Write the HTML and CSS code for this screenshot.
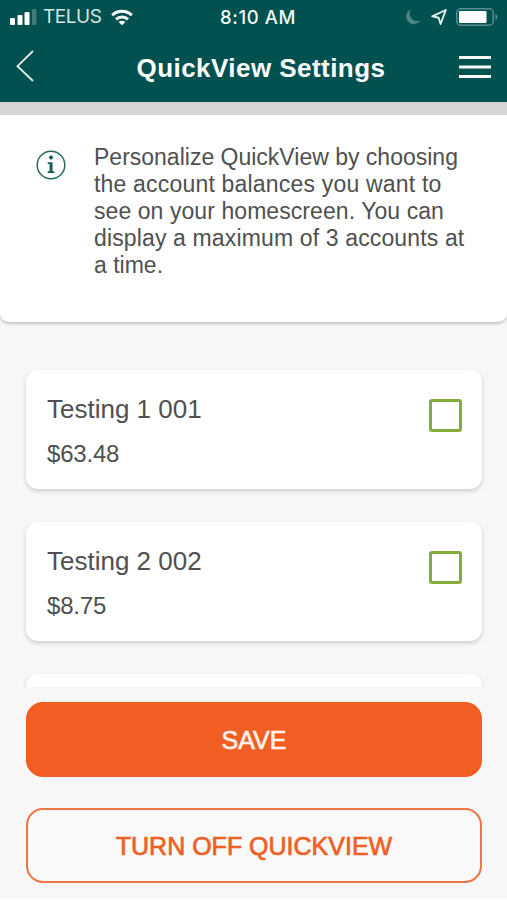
FILE: index.html
```html
<!DOCTYPE html>
<html lang="en">
<head>
<meta charset="utf-8">
<title>QuickView Settings</title>
<link rel="stylesheet" href="styles.css">
</head>
<body>
<div class="app">
  <header class="header">
    <div class="status">
      <div class="carrier">
        <svg width="27" height="16" viewBox="0 0 27 16" fill="#fff"><rect x="0" y="9" width="5" height="7" rx="1"/><rect x="7.500" y="6" width="5" height="10" rx="1"/><rect x="14.500" y="3" width="5" height="13" rx="1"/><rect x="22" y="0" width="4.500" height="16" rx="1" opacity=".25"/></svg>
        <span class="carrier-name">TELUS</span>
        <svg class="wifi" width="22" height="17" viewBox="0 0 22 17" fill="none" stroke="#fff" stroke-width="3"><path d="M1.200 6.200a14 14 0 0 1 19.600 0"/><path d="M5 10.400a8.600 8.600 0 0 1 12 0"/><path d="M11 16.200L7.600 13a4.900 4.900 0 0 1 6.800 0z" fill="#fff" stroke="none"/></svg>
      </div>
      <span class="clock">8:10 AM</span>
      <div class="indicators">
        <svg class="moon" width="15" height="16" viewBox="0 0 15 16"><path d="M5 0.500a7.600 7.600 0 1 0 9.500 10.700A7.400 7.400 0 0 1 5 .5z" fill="#4f8582"/></svg>
        <svg class="arrow" width="16" height="16" viewBox="0 0 16 16" fill="none" stroke="#e4eeed" stroke-width="1.900" stroke-linejoin="round"><path d="M14.800 1L1.200 7.300L7.600 8.700L9.600 15z"/></svg>
        <svg width="42" height="18" viewBox="0 0 42 18"><rect x=".8" y=".8" width="36.500" height="16.400" rx="4" fill="none" stroke="#5a8d8a" stroke-width="1.500"/><rect x="3" y="3" width="27.500" height="12" rx="1" fill="#fff"/><path d="M39.500 6c2.200.8 2.200 5.200 0 6z" fill="#6b9794"/></svg>
      </div>
    </div>
    <div class="nav">
      <svg width="18" height="32" viewBox="0 0 18 32" fill="none" stroke="#e8f1f0" stroke-width="1.800"><path d="M17 1L1.500 16.200L17 31"/></svg>
      <h1 class="title">QuickView Settings</h1>
      <svg class="menu" width="32" height="23" viewBox="0 0 32 23" fill="#f5faf9"><rect width="32" height="3"/><rect y="9.500" width="32" height="3"/><rect y="19" width="32" height="3"/></svg>
    </div>
  </header>
  <section class="info">
    <svg class="info-icon" width="30" height="30" viewBox="0 0 30 30"><circle cx="15" cy="15" r="13.800" fill="none" stroke="#266b63" stroke-width="1.500"/><circle cx="15" cy="7.500" r="2" fill="#115b54"/><path d="M11.700 12.200h4.800v9h1.800v1.700h-6.600v-1.700h1.900v-7.300h-1.900z" fill="#115b54"/></svg>
    <p class="info-text"><span class="l1">Personalize QuickView by choosing</span><br><span class="l2">the account balances you want to</span><br><span class="l3">see on your homescreen. You can</span><br><span class="l4">display a maximum of 3 accounts at</span><br><span class="l5">a time.</span></p>
  </section>
  <main class="list">
    <div class="card">
      <div><div class="name">Testing 1 001</div><div class="amount">$63.48</div></div>
      <span class="check"></span>
    </div>
    <div class="card">
      <div><div class="name">Testing 2 002</div><div class="amount">$8.75</div></div>
      <span class="check"></span>
    </div>
    <div class="card"></div>
  </main>
  <footer class="actions">
    <button class="btn primary"><span class="save">SAVE</span></button>
    <button class="btn outline"><span class="off">TURN OFF QUICKVIEW</span></button>
  </footer>
</div>
</body>
</html>
```
FILE: styles.css
```css
* { box-sizing: border-box; }
body { margin: 0; font-family: "Liberation Sans", Arial, sans-serif; color: #505050; }
svg { display: block; flex: none; }
.app { width: 507px; height: 900px; display: flex; flex-direction: column; background: #f7f7f7; overflow: hidden; border-bottom: 2px solid #fdfdfd; }
.header { flex: none; height: 115px; background: #00514f; border-bottom: 13px solid #d5d5d5; }
.status { height: 34px; display: grid; grid-template-columns: 1fr auto 1fr; align-items: center; padding: 0 9px 0 10px; font-family: Inter, sans-serif; color: #f4f8f8; }
.carrier { display: flex; align-items: center; }
.carrier-name { font-size: 19px; letter-spacing: -.45px; margin-left: 6px; color: #d5e3e2; line-height: 24px; }
.wifi { margin-left: 9px; }
.clock { font-size: 18.500px; font-weight: 500; letter-spacing: .6px; margin: 0 -4px 0 4px; }
.indicators { display: flex; align-items: center; justify-content: flex-end; }
.moon { margin-right: 10px; }
.arrow { margin-right: 9px; }
.nav { height: 68px; display: flex; align-items: center; justify-content: space-between; padding: 0 16px 4px 16px; }
.title { margin: 3px 0 0 29px; font-size: 26px; line-height: 32px; letter-spacing: .45px; color: #fff; white-space: nowrap; }
.menu { margin-top: 3px; }
.info { flex: none; height: 207px; background: #fff; border-radius: 0 0 9px 9px; box-shadow: 0 2px 3px rgba(0,0,0,.2); display: flex; padding: 29px 0 0 36px; }
.info-icon { margin-top: 6px; }
.info-text { margin: 0 0 0 28px; font-size: 23px; line-height: 27px; white-space: nowrap; }
.l2 { letter-spacing: .19px; }
.l3 { letter-spacing: .07px; }
.l4 { letter-spacing: .14px; }
.list { flex: none; height: 365px; padding: 48px 25px 0 26px; display: flex; flex-direction: column; gap: 33px; overflow: hidden; }
.card { flex: none; height: 119px; border-radius: 12px; background: #fff; box-shadow: 0 2px 4px rgba(0,0,0,.18); display: flex; justify-content: space-between; padding: 23px 20px 0 21px; }
.name { font-size: 26px; line-height: 32px; white-space: nowrap; }
.amount { font-size: 24px; line-height: 28px; margin-top: 15px; letter-spacing: -.2px; }
.check { width: 33px; height: 33px; margin-top: 6px; border: 3px solid #84ad3b; border-radius: 3px; }
.actions { padding: 15px 25px 0 26px; display: flex; flex-direction: column; gap: 31px; }
.btn { height: 75px; border-radius: 17px; border: 2px solid #f07545; font: 25px "Liberation Sans", sans-serif; padding: 2px 0 0; -webkit-text-stroke: .7px; }
.primary { background: #f15d22; border-color: #f15d22; color: #fff0e6; }
.outline { background: #f9f9f9; color: #ee6024; }
```
